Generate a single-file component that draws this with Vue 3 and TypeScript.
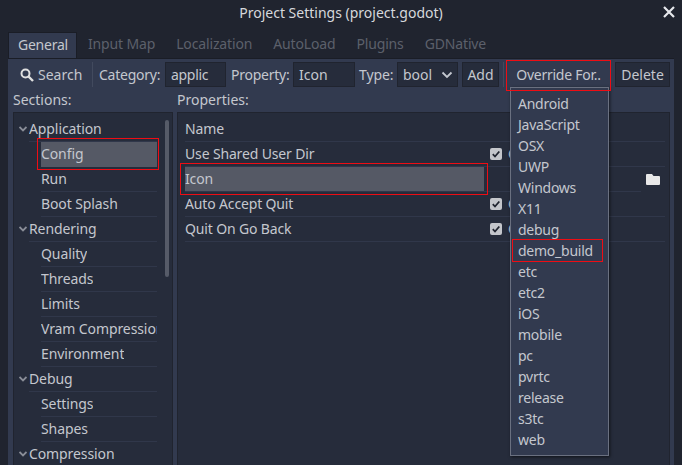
<script setup lang="ts">
interface Row { label: string; level: number; selected?: boolean }
const tabs: string[] = ['General', 'Input Map', 'Localization', 'AutoLoad', 'Plugins', 'GDNative']
const sections: Row[] = [
  { label: 'Application', level: 0 },
  { label: 'Config', level: 1, selected: true },
  { label: 'Run', level: 1 },
  { label: 'Boot Splash', level: 1 },
  { label: 'Rendering', level: 0 },
  { label: 'Quality', level: 1 },
  { label: 'Threads', level: 1 },
  { label: 'Limits', level: 1 },
  { label: 'Vram Compression', level: 1 },
  { label: 'Environment', level: 1 },
  { label: 'Debug', level: 0 },
  { label: 'Settings', level: 1 },
  { label: 'Shapes', level: 1 },
  { label: 'Compression', level: 0 },
]
const menu: string[] = ['Android', 'JavaScript', 'OSX', 'UWP', 'Windows', 'X11', 'debug', 'demo_build', 'etc', 'etc2', 'iOS', 'mobile', 'pc', 'pvrtc', 'release', 's3tc', 'web']
const props = [
  { label: 'Use Shared User Dir', kind: 'check' },
  { label: 'Icon', kind: 'file' },
  { label: 'Auto Accept Quit', kind: 'check' },
  { label: 'Quit On Go Back', kind: 'check' },
]
</script>

<template>
  <div class="window">
    <div class="title">Project Settings (project.godot)
      <svg class="close" width="12" height="12" viewBox="0 0 12 12"><path d="M1 1L11 11M11 1L1 11" stroke="#e6e8ec" stroke-width="2.2" fill="none" /></svg>
    </div>
    <div class="tabs">
      <div v-for="(t, i) in tabs" :key="t" class="tab" :class="{ active: i === 0 }">{{ t }}</div>
    </div>
    <div class="panel">
      <div class="toolbar">
        <div class="search">
          <svg width="14" height="14" viewBox="0 0 14 14"><circle cx="5.500" cy="5.500" r="4" stroke="#e0e0e0" stroke-width="2" fill="none" /><path d="M8.500 8.500L13 13" stroke="#e0e0e0" stroke-width="2.400" /></svg>
          <span>Search</span>
        </div>
        <div class="vsep"></div>
        <span class="lbl l-cat">Category:</span>
        <div class="input cat">applic</div>
        <span class="lbl l-prop">Property:</span>
        <div class="input prop">Icon</div>
        <span class="lbl l-type">Type:</span>
        <div class="input type">bool
          <svg width="12" height="8" viewBox="0 0 12 8"><path d="M1.500 1.500L6 6L10.500 1.500" stroke="#c4c8d0" stroke-width="1.800" fill="none" /></svg>
        </div>
        <div class="input btn add">Add</div>
        <div class="vsep second"></div>
        <div class="override">Override For..</div>
        <div class="input btn del">Delete</div>
      </div>
      <div class="columns">
        <div class="col-left">
          <div class="heading">Sections:</div>
          <div class="tree">
            <div class="tree-inner">
              <div v-for="s in sections" :key="s.label" class="row" :class="['lvl' + s.level, { selected: s.selected }]">
                <svg v-if="s.level === 0" class="arrow" width="8" height="6" viewBox="0 0 8 6"><path d="M0.500 1L4 4.500L7.500 1" stroke="#8a8e98" stroke-width="1.800" fill="none" /></svg>
                <span class="row-text">{{ s.label }}</span>
              </div>
            </div>
            <div class="scroll"></div>
          </div>
        </div>
        <div class="col-right">
          <div class="heading">Properties:</div>
          <div class="props">
            <div class="prow head"><span>Name</span></div>
            <div v-for="p in props" :key="p.label" class="prow" :class="{ chosen: p.kind === 'file' }">
              <div class="pname"><span>{{ p.label }}</span></div>
              <div v-if="p.kind === 'check'" class="pval">
                <svg width="12" height="12" viewBox="0 0 12 12"><rect width="12" height="12" rx="2" fill="#c4c6cb" /><path d="M2.800 6.200L5 8.500L9.300 3.500" stroke="#20242f" stroke-width="1.800" fill="none" /></svg>
                <span class="on">On</span>
              </div>
              <div v-else class="pfile">
                <svg width="14" height="12" viewBox="0 0 14 12"><path d="M0 2a1 1 0 0 1 1-1h5l1.500 2H13a1 1 0 0 1 1 1v7a1 1 0 0 1-1 1H1a1 1 0 0 1-1-1z" fill="#e8e8e8" /></svg>
              </div>
            </div>
          </div>
        </div>
      </div>
    </div>
    <div class="menu">
      <div v-for="m in menu" :key="m" class="menu-item">{{ m }}</div>
    </div>
    <div class="mark m-override"></div>
    <div class="mark m-config"></div>
    <div class="mark m-icon"></div>
    <div class="mark m-demo"></div>
  </div>
</template>

<style>
html, body { margin: 0; padding: 0; background: #20242f; }
</style>

<style scoped>
.window {
  position: relative;
  width: 682px;
  height: 465px;
  overflow: hidden;
  background: #20242f;
  color: #c4c7ce;
  font-family: "Noto Sans", sans-serif;
  font-size: 14px;
  line-height: 19px;
}
.title {
  position: relative;
  height: 32px;
  padding-top: 3px;
  box-sizing: border-box;
  text-align: center;
  color: #d6d8dc;
}
.close { position: absolute; right: 7px; top: 6px; }
.tabs { display: flex; height: 26px; margin-left: 8px; }
.tab {
  padding: 2px 10px 0 11px;
  color: #5c606b;
  letter-spacing: -0.15px;
}
.active {
  width: 69px;
  box-sizing: border-box;
  padding: 2px 0 0 9px;
  background: #323a4f;
  color: #c4c7ce;
  border: 1px solid #1a1d26;
  border-bottom: none;
  letter-spacing: -0.25px;
}
.panel {
  margin-left: 8px;
  width: 666px;
  height: 407px;
  box-sizing: border-box;
  background: #323a4f;
  border-top: 1px solid #1a1d26;
  padding: 3px 4px 0 5px;
}
.toolbar { display: flex; align-items: center; height: 25px; }
.search { display: flex; align-items: center; gap: 4px; padding-left: 7px; width: 79px; box-sizing: border-box; flex: none; }
.vsep { width: 1px; height: 25px; background: #424a5e; flex: none; }
.second { margin-left: 4px; margin-right: 3px; }
.lbl { flex: none; white-space: nowrap; }
.l-cat { width: 66px; margin-left: 6px; letter-spacing: -0.25px; }
.l-prop { width: 62px; margin-left: 5px; letter-spacing: -0.25px; }
.l-type { width: 38px; margin-left: 4px; letter-spacing: -0.1px; }
.input {
  background: #262c3b;
  border: 1px solid #20242f;
  box-sizing: border-box;
  height: 25px;
  display: flex;
  align-items: center;
  padding: 0 5px;
  flex: none;
}
.cat { width: 61px; letter-spacing: -0.3px; }
.prop { width: 62px; }
.type { width: 61px; justify-content: space-between; padding-right: 4px; }
.btn { justify-content: center; }
.add { width: 37px; margin-left: 4px; }
.del { width: 55px; margin-left: 5px; }
.override { width: 103px; flex: none; text-align: center; letter-spacing: -0.25px; }
.columns { display: flex; gap: 4px; }
.heading { height: 25px; padding-top: 3px; box-sizing: border-box; }
.col-left { width: 160px; }
.col-right { width: 493px; }
.tree, .props {
  background: #262c3b;
  border: 1px solid #20242f;
  box-sizing: border-box;
  height: 360px;
}
.tree { position: relative; padding: 4px 0 0 3px; }
.tree-inner { width: 140px; letter-spacing: -0.1px; }
.scroll { position: absolute; right: 3px; top: 7px; width: 4px; height: 157px; border-radius: 2px; background: #565b68; }
.row {
  position: relative;
  height: 25px;
  box-sizing: border-box;
  border-bottom: 1px solid #30374a;
  padding-bottom: 1px;
  white-space: nowrap;
  overflow: hidden;
  display: flex;
  align-items: center;
}
.lvl0 { margin-left: 12px; overflow: visible; }
.lvl1 { margin-left: 24px; }
.row-text { overflow: hidden; max-width: 116px; }
.arrow { position: absolute; left: -10px; top: 9px; }
.selected { background: #555965; border-bottom-color: #555965; }
.props { padding: 4px 4px 0 7px; letter-spacing: -0.15px; }
.prow {
  display: flex;
  align-items: center;
  height: 25px;
  box-sizing: border-box;
  border-bottom: 1px solid #30374a;
  padding-bottom: 1px;
}
.chosen { padding-bottom: 0; }
.pname { width: 299px; height: 100%; display: flex; align-items: center; padding-bottom: 1px; box-sizing: border-box; }
.chosen .pname { background: #555965; }
.pval { display: flex; align-items: center; gap: 6px; margin-left: 6px; }
.pfile {
  align-self: stretch;
  box-sizing: border-box;
  width: 24px;
  margin-left: auto;
  margin-bottom: -1px;
  padding-left: 5px;
  border-bottom: 1px solid #262c3b;
  display: flex;
  align-items: center;
}
.menu {
  position: absolute;
  left: 510px;
  top: 87px;
  width: 99px;
  height: 369px;
  box-sizing: border-box;
  background: #323a4f;
  border: 1px solid #6a7080;
  box-shadow: 1px 1px 3px rgba(0, 0, 0, 0.6);
  padding: 5px 0 0 7px;
  letter-spacing: -0.25px;
}
.menu-item { height: 21px; line-height: 21px; }
.mark { position: absolute; border: 1.500px solid #ee0d14; box-sizing: border-box; pointer-events: none; }
.m-override { left: 506px; top: 60px; width: 105px; height: 31px; }
.m-config { left: 37px; top: 138px; width: 122px; height: 32px; }
.m-icon { left: 180px; top: 163px; width: 308px; height: 32px; }
.m-demo { left: 512px; top: 239px; width: 91px; height: 23px; }
</style>
